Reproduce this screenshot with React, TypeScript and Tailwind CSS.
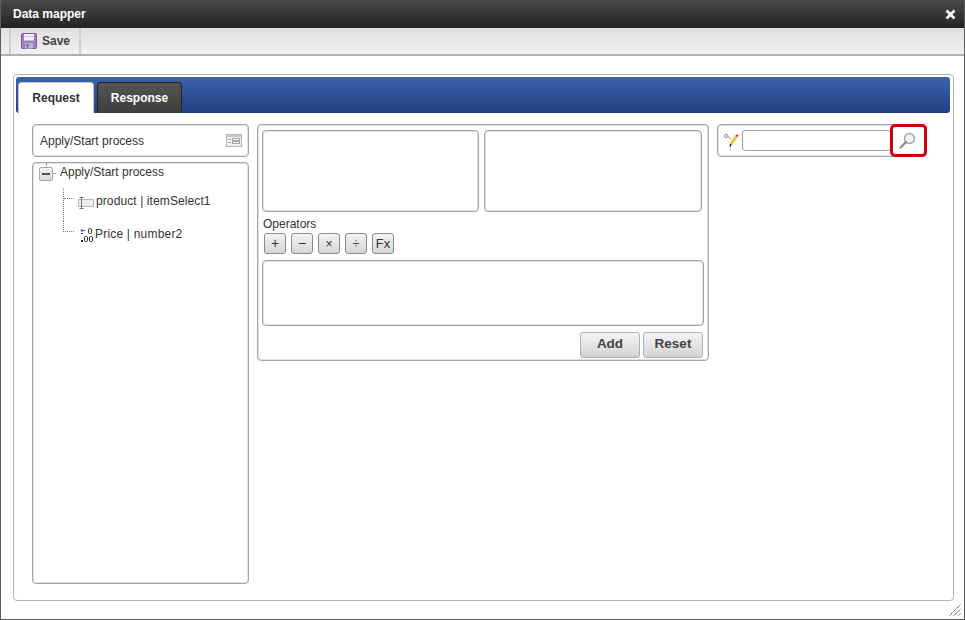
const OPERATORS = [
  { label: '+', cls: 'text-[14px] text-[#333]' },
  { label: '−', cls: 'text-[14px] text-[#333]' },
  { label: '×', cls: 'text-[12px] text-[#333]' },
  { label: '÷', cls: 'text-[12px] text-[#5a3a4a]' },
  { label: 'Fx', cls: 'text-[13px] text-[#333]' },
];

function SaveIcon() {
  return (
    <svg width="16" height="16" viewBox="0 0 16 16">
      <rect x="0.5" y="0.5" width="15" height="15" rx="1" fill="#a27cc4" stroke="#7a5a9c" />
      <rect x="3" y="1" width="10" height="6.5" fill="#f2f2f4" />
      <rect x="3" y="3" width="10" height="1" fill="#c9c9d2" />
      <rect x="4" y="10" width="8" height="5.5" fill="#b9b9c4" />
      <rect x="5.5" y="11" width="2" height="3.5" fill="#7a5a9c" />
    </svg>
  );
}

function FormIcon() {
  return (
    <svg width="16" height="13" viewBox="0 0 16 13">
      <rect x="0.5" y="0.5" width="15" height="12" fill="#f0f0f0" stroke="#b5b5b5" />
      <rect x="1" y="1" width="14" height="2" fill="#c8c8c8" />
      <rect x="2" y="5" width="3" height="1" fill="#a8a8a8" />
      <rect x="2" y="8" width="3" height="1" fill="#a8a8a8" />
      <rect x="6.5" y="4.5" width="7" height="2" fill="#fff" stroke="#a8a8a8" strokeWidth="1" />
      <rect x="6.5" y="7.5" width="7" height="2" fill="#fff" stroke="#a8a8a8" strokeWidth="1" />
    </svg>
  );
}

function SelectIcon() {
  return (
    <svg width="17" height="12" viewBox="0 0 17 12" className="shrink-0">
      <rect x="0.5" y="2.5" width="15" height="7" fill="#eeeeee" stroke="#b8b8b8" />
      <path d="M1.5 0.5h4M1.5 11.5h4M3.5 0.5v11" stroke="#777" fill="none" />
    </svg>
  );
}

function NumberIcon() {
  return (
    <svg width="15" height="14" viewBox="0 0 15 14" className="shrink-0">
      <path d="M1 2.5h4" stroke="#2f5fd0" />
      <path d="M2.5 1 1 2.5 2.5 4" stroke="#2f5fd0" fill="none" />
      <rect x="1" y="5" width="2" height="1" fill="#333" />
      <rect x="1" y="12" width="2" height="2" fill="#222" />
      <rect x="8.5" y="0.5" width="3" height="5" rx="1.2" fill="none" stroke="#333" />
      <rect x="4.5" y="8.5" width="3" height="5" rx="1.2" fill="none" stroke="#222" />
      <rect x="9.5" y="8.5" width="3" height="5" rx="1.2" fill="none" stroke="#222" />
    </svg>
  );
}

function PencilIcon() {
  return (
    <svg width="18" height="18" viewBox="0 0 18 18" className="shrink-0">
      <circle cx="3" cy="4" r="1.8" fill="#eee" stroke="#999" />
      <path d="M5 4.5 8 7" stroke="#999" />
      <path d="M8 12 14 3.5" stroke="#e8c33c" strokeWidth="3" />
      <path d="M13.2 3 15 4.2" stroke="#d8323c" strokeWidth="2" />
      <path d="M8 12 7 14.5" stroke="#222" strokeWidth="1.5" />
      <path d="M7.5 15v3" stroke="#888" strokeDasharray="1 1" />
    </svg>
  );
}

function SearchIcon() {
  return (
    <svg width="17" height="17" viewBox="0 0 17 17">
      <circle cx="10.5" cy="6.5" r="5" fill="#f2f5f8" stroke="#a0a4a8" strokeWidth="1.4" />
      <path d="M7 10 1.5 15.5" stroke="#8a8a8a" strokeWidth="2.2" strokeLinecap="round" />
    </svg>
  );
}

function ResizeGrip() {
  return (
    <svg width="12" height="12" viewBox="0 0 12 12">
      <path d="M0.5 11.5 11.5 0.5M5 11.5l6.5-6.5M9.5 11.5l2-2" stroke="#2a5a8c" strokeDasharray="1.5 0.6" fill="none" />
    </svg>
  );
}

const BOX = 'rounded-[4px] border border-[#a6a6a6] bg-white shadow-[inset_0_0_0_1px_#e2e2e2]';

export default function App() {
  return (
    <div className="relative flex h-[620px] w-[965px] flex-col overflow-hidden border-x border-b border-x-[#5c5c5c] border-b-[#5c5c5c] bg-white font-['Liberation_Sans',Arial,sans-serif] text-[12px] text-[#333]">
      <div className="flex h-[28px] shrink-0 items-center justify-between bg-gradient-to-b from-[#4a4a4a] to-[#232323] pl-[12px] pr-[8px]">
        <span className="font-bold text-white">Data mapper</span>
        <svg width="11" height="11" viewBox="0 0 11 11">
          <path d="M1.5 1.5l8 8M9.5 1.5l-8 8" stroke="#fff" strokeWidth="2.6" />
        </svg>
      </div>

      <div className="flex h-[28px] shrink-0 border-b-2 border-[#b0b0b0] bg-gradient-to-b from-[#e0e0e0] to-[#f0f0f0] pl-[8px]">
        <div className="flex h-full w-[72px] items-center gap-[5px] border-x-2 border-[#cfcfcf] pl-[10px] font-bold text-[#444]">
          <SaveIcon />
          <span>Save</span>
        </div>
      </div>

      <div className="flex min-h-0 flex-1 flex-col pb-[18px] pl-[12px] pr-[10px] pt-[18px]">
        <div className="flex min-h-0 flex-1 flex-col rounded-[4px] border border-[#b4b4b4] p-[2px] pb-0">
          <div className="flex h-[36px] w-[934px] shrink-0 items-end gap-[3px] rounded-[3px] bg-gradient-to-b from-[#3a62ae] to-[#243f80] pl-[2px]">
            <div className="flex h-[31px] w-[76px] items-center justify-center rounded-t-[4px] border border-b-0 border-[#c8c8c8] bg-white font-bold text-[#333]">
              Request
            </div>
            <div className="flex h-[31px] w-[85px] items-center justify-center rounded-t-[4px] border border-b-0 border-[#222] bg-gradient-to-b from-[#555] to-[#3d3d3d] font-bold text-white">
              Response
            </div>
          </div>

          <div className="flex min-h-0 flex-1 gap-[8px] pb-[16px] pl-[16px] pt-[11px]">
            <div className="flex w-[217px] shrink-0 flex-col gap-[5px]">
              <div className={`${BOX} flex h-[33px] shrink-0 items-center justify-between pl-[7px] pr-[6px]`}>
                <span>Apply/Start process</span>
                <FormIcon />
              </div>
              <div className={`${BOX} min-h-0 flex-1`}>
                <div className="flex h-[18px] items-start pl-[6px]">
                  <div className="flex w-[14px] flex-col items-center">
                    <span className="h-[4px] border-l border-dotted border-[#888]" />
                    <span className="flex h-[14px] w-[14px] items-center justify-center rounded-[2px] border border-[#aaa] bg-gradient-to-b from-[#f4f4f4] to-[#d8d8d8]">
                      <span className="h-[2px] w-[8px] bg-[#555]" />
                    </span>
                  </div>
                  <span className="mr-[4px] mt-[10px] w-[3px] border-t border-dotted border-[#888]" />
                  <span className="mt-[2px] leading-[14px]">Apply/Start process</span>
                </div>
                <div className="ml-[30px] mt-[7px] flex flex-col leading-[14px]">
                  <div className="flex h-[33px] items-start">
                    <span className="h-[33px] w-[11px] shrink-0 border-l border-dotted border-[#888]">
                      <span className="mt-[10px] block border-t border-dotted border-[#888]" />
                    </span>
                    <span className="ml-[4px] mt-[9px]">
                      <SelectIcon />
                    </span>
                    <span className="ml-[1px] mt-[6px] tracking-[0.1px]">product | itemSelect1</span>
                  </div>
                  <div className="flex h-[33px] items-start">
                    <span className="h-[11px] w-[11px] shrink-0 border-b border-l border-dotted border-[#888]" />
                    <span className="ml-[6px] mt-[7px]">
                      <NumberIcon />
                    </span>
                    <span className="mt-[6px] tracking-[0.2px]">Price | number2</span>
                  </div>
                </div>
              </div>
            </div>

            <div className={`${BOX} flex h-[237px] w-[452px] shrink-0 flex-col pl-[4px] pt-[5px]`}>
              <div className="flex gap-[5px]">
                <div className={`${BOX} h-[82px] w-[217px]`} />
                <div className={`${BOX} h-[82px] w-[218px]`} />
              </div>
              <div className="pl-[1px] pt-[5px] leading-[15px]">Operators</div>
              <div className="flex gap-[5px] pl-[2px] pt-[1px]">
                {OPERATORS.map((op) => (
                  <div
                    key={op.label}
                    className={`flex h-[21px] w-[22px] items-center justify-center rounded-[3px] border border-[#8c8c8c] bg-gradient-to-b from-[#f4f4f4] to-[#d6d6d6] ${op.cls}`}
                  >
                    {op.label}
                  </div>
                ))}
              </div>
              <div className={`${BOX} mt-[6px] h-[66px] w-[442px] shrink-0`} />
              <div className="flex justify-end gap-[3px] pr-[5px] pt-[6px]">
                <div className="flex h-[26px] w-[60px] items-center justify-center rounded-[3px] border border-[#b0b0b0] bg-gradient-to-b from-[#f4f4f4] to-[#d4d4d4] pb-[1px] text-[13.5px] font-bold text-[#444]">
                  Add
                </div>
                <div className="flex h-[26px] w-[60px] items-center justify-center rounded-[3px] border border-[#b0b0b0] bg-gradient-to-b from-[#f4f4f4] to-[#d4d4d4] pb-[1px] text-[13.5px] font-bold text-[#444]">
                  Reset
                </div>
              </div>
            </div>

            <div className={`${BOX} relative flex h-[33px] w-[210px] shrink-0 items-center pl-[5px]`}>
              <PencilIcon />
              <div className="ml-[1px] h-[21px] w-[149px] rounded-[3px] border border-[#a0a0a0] bg-white" />
              <div className="absolute left-[172px] top-[-1px] flex h-[33px] w-[37px] items-center justify-center rounded-[5px] border-[3px] border-[#d0000a] pr-[2px]">
                <SearchIcon />
              </div>
            </div>
          </div>
        </div>
      </div>

      <div className="absolute bottom-[3px] right-[3px]">
        <ResizeGrip />
      </div>
    </div>
  );
}
